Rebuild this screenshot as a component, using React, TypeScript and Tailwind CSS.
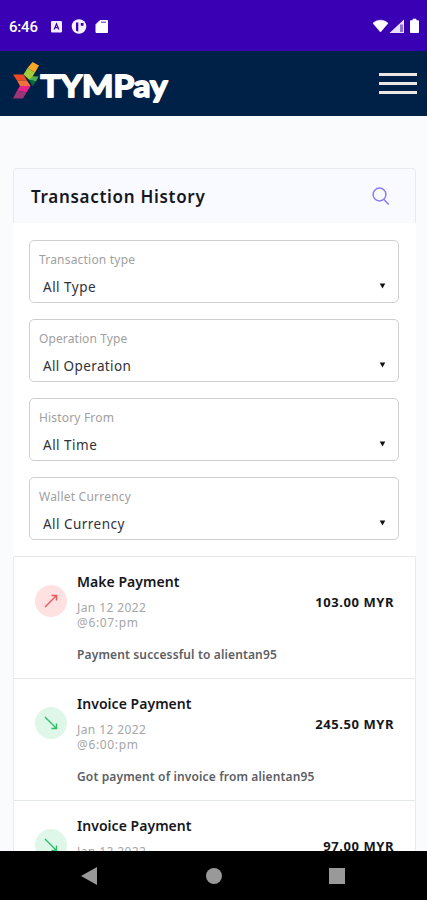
import React from "react";

const filters = [
  { label: "Transaction type", value: "All Type", lt: "tracking-[0.2px]", vt: "tracking-[0.5px]" },
  { label: "Operation Type", value: "All Operation", lt: "tracking-[0.1px]", vt: "tracking-[0.38px]" },
  { label: "History From", value: "All Time", lt: "tracking-[0.18px]", vt: "tracking-[0.5px]" },
  { label: "Wallet Currency", value: "All Currency", lt: "tracking-[0.22px]", vt: "tracking-[0.47px]" },
];

const transactions = [
  { title: "Make Payment", time: "@6:07:pm", note: "Payment successful to alientan95", amount: "103.00 MYR", out: true },
  { title: "Invoice Payment", time: "@6:00:pm", note: "Got payment of invoice from alientan95", amount: "245.50 MYR", out: false },
  { title: "Invoice Payment", time: "@5:58:pm", note: "Got payment of invoice from alientan95", amount: "97.00 MYR", out: false },
];

function StatusBar() {
  return (
    <div className="flex h-[51px] shrink-0 items-center bg-[#3a00b3] pl-[9px] pr-[6px] pt-[2px] text-white">
      <span className="w-[42px] whitespace-nowrap pt-px font-[Roboto] text-[15px] font-medium leading-none tracking-[-0.2px]">6:46</span>
      <svg className="h-[20px] w-[60px]" viewBox="0 0 60 20">
        <rect x="0" y="4" width="11" height="11.500" rx="1.200" fill="#f3edff" />
        <path d="M3.200 12.500 5.500 6.800 7.800 12.500M4 10.700h3" fill="none" stroke="#3a00b3" strokeWidth="1.200" />
        <circle cx="28" cy="9.500" r="7.300" fill="#f5f0ff" />
        <path d="M25 5.500h2.300v9a5.500 5.500 0 0 1-2.300-1z" fill="#3a00b3" />
        <path d="M29.800 6h2.700v2.800h-2.700z" fill="#3a00b3" />
        <path d="M49 3.500h7.500v12h-11.500v-8z" fill="#fff" stroke="#fff" strokeLinejoin="round" />
        <path d="M50 5.200h5" stroke="#7d58cf" strokeWidth="1.300" />
      </svg>
      <svg className="ml-auto h-[20px] w-[49px]" viewBox="0 0 49 20">
        <path d="M1 6.200C5 2.200 12 2.200 16 6.200L8.500 15z" fill="#fff" stroke="#fff" strokeWidth=".6" strokeLinejoin="round" />
        <path d="M32 2.500V16H17.500z" fill="#e8e0ff" />
        <path d="M28 7.500h3v7.500h-3z" fill="#8d70d2" />
        <path d="M41 2.200h3v1.600h2.500v11.700h-8V3.800H41z" fill="#fff" stroke="#fff" strokeLinejoin="round" />
      </svg>
    </div>
  );
}

function Header() {
  return (
    <header className="flex h-[65px] shrink-0 items-center bg-[#002147] pl-[12px] pr-[10px]">
      <svg className="h-[65px] w-[162px]" viewBox="0 0 162 65">
        <path d="M20.500 11 27 14.500 23 21.500 15.500 17z" fill="#f9a825" />
        <path d="M15.500 17 23 21.500 20.500 25.500 25.500 26 18 29.500 11.500 23.500z" fill="#a3cd3a" />
        <path d="M20.500 25.500H26.500L24 30.500 17 28.500z" fill="#4caf50" />
        <path d="M17 28.500 24 30.500 20.500 35z" fill="#0d6b3c" />
        <path d="M1 23.500h10.500L15 29.500 5 29.500z" fill="#f04a24" />
        <path d="M5 29.500h10L18.500 35H8z" fill="#f2703a" />
        <path d="M8 35h10.500L14.500 41.500 5 39.500z" fill="#e5238b" />
        <path d="M5 39.500 14.500 41.500 11 47.500H1z" fill="#9c3478" />
        <text x="28.500" y="46" fontFamily="Lato, sans-serif" fontWeight="700" fontSize="31" fill="#fff" stroke="#fff" strokeWidth="1.800" strokeLinejoin="round" strokeLinecap="round" textLength="127" lengthAdjust="spacingAndGlyphs">TYMPay</text>
      </svg>
      <div className="ml-auto flex w-[38px] flex-col gap-[6px]">
        <span className="h-[3px] bg-[#ece7e6]" />
        <span className="h-[3px] bg-[#ece7e6]" />
        <span className="h-[3px] bg-[#ece7e6]" />
      </div>
    </header>
  );
}

function Filter({ label, value, lt, vt }: (typeof filters)[number]) {
  return (
    <div className="flex h-[63px] flex-col rounded-[5px] border border-[#cfcfcf] bg-white pl-[9px] pr-[12px] pt-[9px]">
      <span className={`text-[12px] leading-[20px] text-[#a0a0a0] ${lt}`}>{label}</span>
      <div className="mt-[6px] flex items-center justify-between pl-[4px]">
        <span className={`text-[13.5px] leading-[22px] text-[#303238] ${vt}`}>{value}</span>
        <svg className="mb-[2px] h-[6px] w-[7px]" viewBox="0 0 7 6"><path d="M.7.5h5.600L3.500 5.500z" fill="#111" /></svg>
      </div>
    </div>
  );
}

function Transaction({ title, time, note, amount, out }: (typeof transactions)[number]) {
  return (
    <div className="flex h-[121.800px] shrink-0 border-t-[1.500px] border-[#e5e8e8] pl-[21px] pr-[21px]">
      <div className={`mt-[28px] flex h-[32px] w-[32px] shrink-0 items-center justify-center rounded-full ${out ? "bg-[#ffe1e2]" : "bg-[#dff7e8]"}`}>
        <svg className="h-[16px] w-[16px]" viewBox="0 0 16 16" fill="none" stroke={out ? "#ef5559" : "#2ebd68"} strokeWidth="1.400">
          {out ? <path d="M2 14 13.500 2.500M8.500 2.500h5v5" /> : <path d="M2 2 13.500 13.500M8.500 13.500h5v-5" />}
        </svg>
      </div>
      <div className="flex flex-col whitespace-nowrap pl-[10px] pt-[15px]">
        <span className="text-[14px] font-semibold leading-[20px] tracking-[0.04px] text-[#15171d]">{title}</span>
        <span className="mt-[8px] text-[12px] leading-[15px] tracking-[0.4px] text-[#a6a6a6]">Jan 12 2022</span>
        <span className="text-[12px] leading-[15px] tracking-[0.65px] text-[#a6a6a6]">{time}</span>
        <span className="mt-[16px] w-0 text-[12px] font-semibold leading-[18px] tracking-[0.14px] text-[#5c6064]">{note}</span>
      </div>
      <span className="ml-auto pt-[35px] text-[13px] font-bold leading-[20px] tracking-[0.55px] text-[#16171a]">{amount}</span>
    </div>
  );
}

export default function App() {
  return (
    <div className="flex h-[900px] w-[427px] flex-col overflow-hidden bg-[#fafbfd] font-['Noto_Sans',sans-serif]">
      <StatusBar />
      <Header />
      <main className="min-h-0 flex-1 overflow-hidden pl-[13px] pr-[11px] pt-[52px]">
        <div className="flex h-[55px] items-center justify-between rounded-t-[4px] border border-b-0 border-[#e8eaed] bg-[#f8faff] pl-[17px] pr-[24px]">
          <h1 className="pt-[2px] text-[17px] font-semibold tracking-[0.7px] text-[#151722]">Transaction History</h1>
          <svg className="h-[20px] w-[20px]" viewBox="0 0 20 20" fill="none" stroke="#8f7af0" strokeWidth="1.500">
            <circle cx="8.500" cy="8.500" r="6.400" /><path d="m13 13.500 4.700 5" />
          </svg>
        </div>
        <div className="flex flex-col gap-[16px] bg-white pb-[16px] pl-[16px] pr-[17px] pt-[17px]">
          {filters.map((f) => <Filter key={f.label} {...f} />)}
        </div>
        <div className="flex flex-col border-x border-[#e9ecec] bg-white">
          {transactions.map((t, i) => <Transaction key={i} {...t} />)}
        </div>
      </main>
      <nav className="flex h-[49px] shrink-0 items-center justify-between bg-black pl-[81px] pr-[82px]">
        <svg className="h-[18px] w-[17px]" viewBox="0 0 17 18"><path d="M16 0v18L0 9z" fill="#999" /></svg>
        <span className="h-[16px] w-[16px] rounded-full bg-[#999]" />
        <span className="h-[16px] w-[16px] bg-[#999]" />
      </nav>
    </div>
  );
}
